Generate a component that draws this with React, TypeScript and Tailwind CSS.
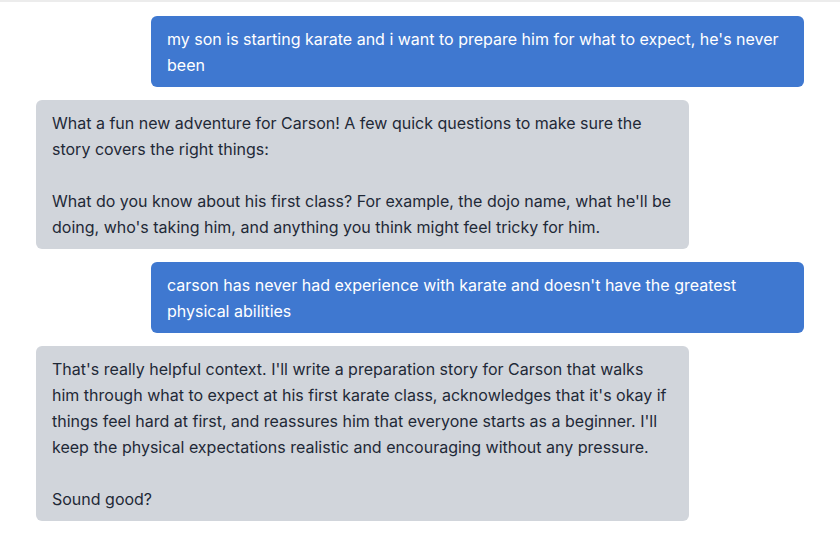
import React from 'react';

type Message = {
    role: 'user' | 'assistant';
    paragraphs: string[];
};

const messages: Message[] = [
    {
        role: 'user',
        paragraphs: ["my son is starting karate and i want to prepare him for what to expect, he's never been"],
    },
    {
        role: 'assistant',
        paragraphs: [
            'What a fun new adventure for Carson! A few quick questions to make sure the story covers the right things:',
            "What do you know about his first class? For example, the dojo name, what he'll be doing, who's taking him, and anything you think might feel tricky for him.",
        ],
    },
    {
        role: 'user',
        paragraphs: ["carson has never had experience with karate and doesn't have the greatest physical abilities"],
    },
    {
        role: 'assistant',
        paragraphs: [
            "That's really helpful context. I'll write a preparation story for Carson that walks him through what to expect at his first karate class, acknowledges that it's okay if things feel hard at first, and reassures him that everyone starts as a beginner. I'll keep the physical expectations realistic and encouraging without any pressure.",
            'Sound good?',
        ],
    },
];

const Bubble: React.FC<{ message: Message }> = ({ message }) => {
    const isUser = message.role === 'user';
    return (
        <div className={isUser ? 'flex justify-end' : 'flex justify-start'}>
            <div
                className={
                    isUser
                        ? 'w-[653px] rounded-md bg-[#3f78d0] px-4 pt-[10px] pb-[9px] text-white'
                        : 'w-[653px] rounded-md bg-[#d1d5db] px-4 pt-[10px] pb-[9px] text-[#1f2937]'
                }
            >
                {message.paragraphs.map((p, i) => (
                    <p key={i} className={i > 0 ? 'mt-[26px]' : ''}>
                        {p}
                    </p>
                ))}
            </div>
        </div>
    );
};

export default function App() {
    return (
        <div
            className="min-h-[550px] w-[840px] border-t-2 border-[#ececec] bg-white pl-9 pr-[36px] pt-[14px] text-[16px] leading-[26px]"
            style={{ fontFamily: 'Inter, "Liberation Sans", sans-serif' }}
        >
            <div className="flex flex-col gap-[13px]">
                {messages.map((m, i) => (
                    <Bubble key={i} message={m} />
                ))}
            </div>
        </div>
    );
}
